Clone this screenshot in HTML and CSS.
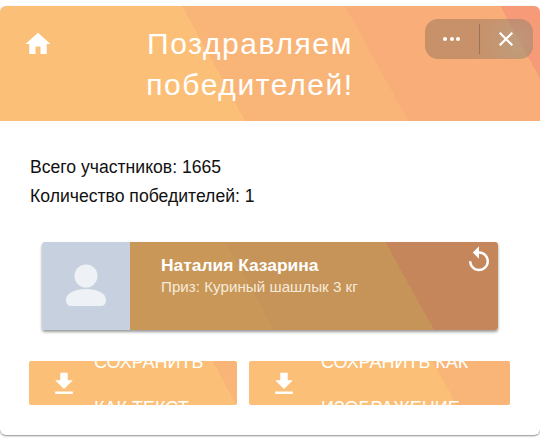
FILE: index.html
```html
<!DOCTYPE html>
<html lang="ru">
<head>
<meta charset="utf-8">
<title>Поздравляем победителей!</title>
<link rel="stylesheet" href="styles.css">
</head>
<body>
<main class="window">
  <header class="header">
    <svg class="home" viewBox="0 0 24 24"><path d="M10 20v-6h4v6h5v-8h3L12 3 2 12h3v8z"/></svg>
    <h1 class="title">Поздравляем победителей!</h1>
    <div class="capsule">
      <div class="cap-btn"><span class="dot"></span><span class="dot"></span><span class="dot"></span></div>
      <div class="cap-div"></div>
      <div class="cap-btn">
        <svg class="close" viewBox="0 0 14 14"><path d="M1.5 1.5l11 11M12.5 1.5l-11 11"/></svg>
      </div>
    </div>
  </header>
  <section class="stats">
    <p class="stat">Всего участников: 1665</p>
    <p class="stat">Количество победителей: 1</p>
  </section>
  <section class="winner">
    <div class="avatar">
      <svg class="person" viewBox="0 0 42 44"><circle cx="21" cy="12" r="11.500"/><path d="M1 36c0-7 9-11 20-11s20 4 20 11c0 4-2 6-6 6H7c-4 0-6-2-6-6z"/></svg>
    </div>
    <div class="info">
      <div class="name">Наталия Казарина</div>
      <div class="prize">Приз: Куриный шашлык 3 кг</div>
      <svg class="replay" viewBox="0 0 24 24"><path d="M12 5V1L7 6l5 5V7c3.31 0 6 2.69 6 6s-2.69 6-6 6-6-2.69-6-6H4c0 4.42 3.58 8 8 8s8-3.58 8-8-3.58-8-8-8z"/></svg>
    </div>
  </section>
  <section class="actions">
    <button class="btn btn-text">
      <svg class="dl" viewBox="0 0 24 24"><path d="M19 9h-4V3H9v6H5l7 7 7-7zM5 18v2h14v-2H5z"/></svg>
      <span class="btn-label">Сохранить как текст</span>
    </button>
    <button class="btn btn-image">
      <svg class="dl" viewBox="0 0 24 24"><path d="M19 9h-4V3H9v6H5l7 7 7-7zM5 18v2h14v-2H5z"/></svg>
      <span class="btn-label">Сохранить как изображение</span>
    </button>
  </section>
</main>
</body>
</html>
```
FILE: styles.css
```css
* { box-sizing: border-box; }
html, body { margin: 0; height: 100%; background: #fff; }
body { padding-top: 6px; font-family: "Liberation Sans", Arial, sans-serif; overflow: hidden; }
.window {
  height: 429px;
  background: #fff;
  border-radius: 6px;
  box-shadow: 0 1px 2px rgba(0,0,0,.45);
  overflow: hidden;
}
.header {
  position: relative;
  height: 115px;
  display: flex;
  justify-content: center;
  padding: 17px 40px 0 0;
  background: linear-gradient(61.3deg, #fcbf77 215px, #f9b578 215px, #f9b578 358px, #f9ad78 358px, #f9ad78 494px, #f79a78 494px);
}
.home { position: absolute; left: 23px; top: 23px; width: 30px; height: 30px; fill: #fff; }
.title {
  margin: 0;
  width: 230px;
  text-align: center;
  color: #fff;
  font-size: 30px;
  font-weight: 400;
  line-height: 41px;
  letter-spacing: 1.6px;
}
.capsule {
  position: absolute;
  left: 425px;
  top: 13px;
  width: 108px;
  height: 40px;
  border-radius: 13px;
  background: radial-gradient(circle at 85% 60%, rgba(170,150,125,.72), rgba(130,105,85,.42) 45%);
  display: flex;
  align-items: center;
}
.cap-btn { flex: 1; display: flex; justify-content: center; align-items: center; gap: 2.500px; }
.dot { width: 4px; height: 4px; border-radius: 50%; background: #fff; }
.cap-div { width: 1px; height: 30px; background: rgba(120,90,70,.55); }
.close { width: 16px; height: 16px; fill: none; stroke: #fff; stroke-width: 2; }
.stats { padding: 36px 30px 0; }
.stat { margin: 0 0 9px; font-size: 17.600px; line-height: 20px; color: #111; }
.winner {
  margin: 36px 42px 0;
  height: 88px;
  display: flex;
  border-radius: 3px;
  box-shadow: 0 2px 3px rgba(0,0,0,.4);
  overflow: hidden;
}
.avatar {
  width: 88px;
  background: #c7d0de;
  display: flex;
  align-items: center;
  justify-content: center;
}
.person { width: 42px; height: 44px; fill: #eef1f5; }
.info {
  position: relative;
  flex: 1;
  padding: 13px 0 0 31px;
  color: #fff;
  background: linear-gradient(61deg, #c99859 126px, #c69458 126px, #c69458 266px, #c4865a 266px);
}
.name { font-size: 17.400px; font-weight: 700; line-height: 20px; }
.prize { margin-top: 3px; font-size: 15.200px; line-height: 17px; color: #f6ead8; }
.replay { position: absolute; right: 4px; top: 3px; width: 30px; height: 30px; fill: #fff; }
.actions { margin: 31px 30px 0 29px; display: flex; gap: 12px; }
.btn {
  height: 44px;
  padding: 0;
  border: 0;
  border-radius: 2px;
  display: flex;
  align-items: center;
  color: #fff;
  font: 400 18px/46px "Liberation Sans", Arial, sans-serif;
  text-align: left;
  text-transform: uppercase;
  background: linear-gradient(61.3deg, #fcbf77 182px, #f9b578 182px);
}
.btn-text { width: 208px; }
.btn-image { width: 261px; }
.dl { flex: none; margin: 1px 15px 0 20px; width: 30px; height: 30px; fill: #fff; }
.btn-image .dl { margin-right: 22px; }
.btn-label { display: block; flex: 1; padding-top: 4px; }
```
